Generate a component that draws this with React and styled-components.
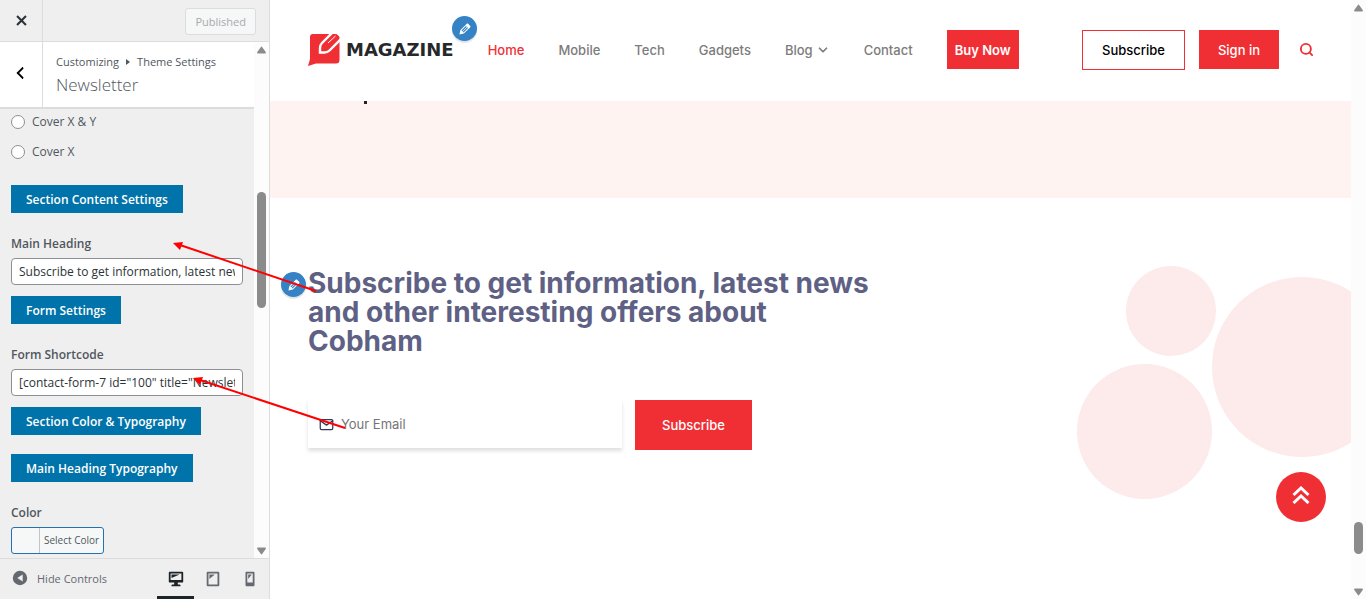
import { useState } from 'react'
import styled, { createGlobalStyle } from 'styled-components'
import { FiChevronDown, FiSearch, FiMail } from 'react-icons/fi'

const GlobalStyle = createGlobalStyle`
  * {
    box-sizing: border-box;
  }

  body {
    margin: 0;
    background: #fff;
  }

  button, input {
    font-family: inherit;
    margin: 0;
  }

  a {
    text-decoration: none;
  }
`

const Page = styled.div`
  position: relative;
  display: flex;
  height: 100vh;
  overflow: hidden;
`

const Sidebar = styled.aside`
  display: flex;
  flex-direction: column;
  flex: none;
  width: 270px;
  border-right: 1px solid #dcdcde;
  background: #efefef;
  color: #50575e;
  font-family: 'Open Sans', 'Noto Sans', sans-serif;
  font-size: 12px;
  line-height: 18px;
`

const TopBar = styled.div`
  display: flex;
  align-items: center;
  justify-content: space-between;
  flex: none;
  height: 42px;
  padding-right: 13px;
  border-bottom: 1px solid #dcdcde;
`

const IconButton = styled.button`
  display: flex;
  align-items: center;
  justify-content: center;
  align-self: stretch;
  flex: none;
  width: 43px;
  padding: ${props => props.$white ? '0 2px 4px 0' : '0'};
  border: none;
  border-right: 1px solid #dcdcde;
  background: ${props => props.$white ? '#fff' : 'transparent'};
  color: ${props => props.$white ? '#000' : '#2c3338'};
  cursor: pointer;
`

const PublishedButton = styled.button`
  height: 27px;
  margin-top: 2px;
  padding: 0 9px;
  border: 1px solid #dcdcde;
  border-radius: 3px;
  background: #f6f7f7;
  color: #a7aaad;
  font-size: 11px;
`

const ScrollArea = styled.div`
  display: flex;
  flex: 1;
  min-height: 0;
`

const Panel = styled.div`
  flex: 1;
  min-width: 0;
  overflow: hidden;
`

const PanelHeader = styled.header`
  display: flex;
  height: 67px;
  border-bottom: 2px solid #dcdcde;
  background: #fff;
`

const PanelTitle = styled.div`
  padding: 11px 13px;
`

const Breadcrumb = styled.div`
  display: flex;
  align-items: center;
  gap: 7px;
  font-size: 11px;
`

const Title = styled.h1`
  margin: 0;
  font-size: 17px;
  font-weight: 300;
  line-height: 28px;
`

const Controls = styled.div`
  display: flex;
  flex-direction: column;
  align-items: flex-start;
  padding: 4px 11px 0;
`

const RadioLabel = styled.label`
  display: flex;
  align-items: center;
  gap: 7px;
  height: 18px;
  margin-bottom: 12px;
`

const Radio = styled.input`
  appearance: none;
  width: 14px;
  height: 14px;
  border: 1px solid #8c8f94;
  border-radius: 50%;
  background: #fff;
`

const GroupButton = styled.button`
  height: 28px;
  margin-top: ${props => props.$gap || 11}px;
  padding: 0 15px;
  border: none;
  background: #0073aa;
  color: #fff;
  font-size: 12px;
  font-weight: 600;
  white-space: nowrap;
`

const Field = styled.div`
  display: flex;
  flex-direction: column;
  align-items: flex-start;
  gap: 5px;
  width: 100%;
  margin-top: 22px;
`

const FieldLabel = styled.label`
  font-weight: 600;
`

const TextInput = styled.input`
  width: 100%;
  height: 27px;
  padding: 0 7px;
  border: 1px solid #8c8f94;
  border-radius: 4px;
  background: #fff;
  color: #2c3338;
  font-size: 12px;
`

const ColorButton = styled.button`
  display: flex;
  align-items: center;
  height: 27px;
  padding: 0;
  border: 1px solid #2271b1;
  border-radius: 3px;
  background: #f6f7f7;
  color: #50575e;
  font-size: 10px;
`

const ColorText = styled.span`
  margin-left: 27px;
  padding: 0 4px;
  border-left: 1px solid #c3c4c7;
  line-height: 25px;
`

const Footer = styled.footer`
  display: flex;
  align-items: center;
  justify-content: space-between;
  flex: none;
  height: 41px;
  border-top: 1px solid #dcdcde;
`

const HideButton = styled.button`
  display: flex;
  align-items: center;
  gap: 8px;
  padding: 0 11px 2px;
  border: none;
  background: none;
  color: #646970;
  font-size: 11px;
`

const Devices = styled.div`
  display: flex;
  align-self: stretch;
  padding-right: 1px;
`

const DeviceButton = styled.button`
  display: flex;
  align-items: center;
  justify-content: center;
  width: 37px;
  padding: 3px 0 0;
  border: none;
  border-bottom: 3px solid ${props => props.$active ? '#1d2327' : 'transparent'};
  background: none;
  color: ${props => props.$active ? '#1d2327' : '#646970'};
`

const Track = styled.div`
  display: flex;
  flex-direction: column;
  align-items: center;
  flex: none;
  width: 15px;
  padding: 4px 0 3px;
  background: #fcfcfc;
  color: #8b8b8b;
`

const Space = styled.div`
  flex: ${props => props.$grow} 0 0;
`

const Thumb = styled.div`
  width: 9px;
  height: ${props => props.$size}px;
  border-radius: 5px;
  background: #8b8b8b;
`

const Preview = styled.main`
  position: relative;
  display: flex;
  flex-direction: column;
  flex: 1;
  min-width: 0;
  background: #fff;
  font-family: Inter, 'Open Sans', sans-serif;
  font-size: 13px;
`

const Header = styled.header`
  display: flex;
  align-items: center;
  flex: none;
  height: 101px;
  padding: 0 37px 2px 38px;
`

const Logo = styled.a`
  display: flex;
  align-items: center;
  gap: 6px;
  margin-right: 34px;
  color: #262829;
  font-family: 'DejaVu Sans', sans-serif;
  font-size: 18px;
  font-weight: 700;
`

const EditBadge = styled.button`
  position: absolute;
  top: ${props => props.$top}px;
  left: ${props => props.$left}px;
  display: flex;
  align-items: center;
  justify-content: center;
  width: 25px;
  height: 25px;
  padding: 0;
  border: none;
  border-radius: 50%;
  background: #3582c4;
  color: #fff;
  box-shadow: 0 2px 1px rgba(60, 67, 74, 0.15);
`

const Nav = styled.nav`
  display: flex;
  align-items: center;
  gap: 34px;
`

const NavLink = styled.a`
  display: flex;
  align-items: center;
  gap: 3px;
  color: ${props => props.$active ? '#f02f34' : '#7c7c7c'};
  font-weight: 500;
`

const ActionLink = styled.a`
  display: flex;
  align-items: center;
  justify-content: center;
  width: ${props => props.$width}px;
  height: ${props => props.$outline ? 40 : 39}px;
  border: 1px solid #f02f34;
  background: ${props => props.$outline ? '#fff' : '#f02f34'};
  color: ${props => props.$outline ? '#000' : '#fff'};
  font-weight: ${props => props.$bold ? 600 : 500};
`

const Actions = styled.div`
  display: flex;
  align-items: center;
  gap: 14px;
  margin-left: auto;
`

const SearchButton = styled.button`
  display: flex;
  margin-left: 6px;
  padding: 0;
  border: none;
  background: none;
  color: #f02f34;
`

const Band = styled.div`
  flex: none;
  height: 97px;
  padding-left: 94px;
  background: #fff3f2;
`

const BandMark = styled.div`
  width: 3px;
  height: 3px;
  background: #222;
`

const Newsletter = styled.section`
  position: relative;
  flex: 1;
  padding: 71px 38px 0;
  overflow: hidden;
`

const Heading = styled.h2`
  max-width: 580px;
  margin: 0;
  color: #5e6184;
  font-size: 28px;
  font-weight: 700;
  line-height: 29px;
`

const Form = styled.form`
  display: flex;
  gap: 13px;
  margin-top: 44px;
`

const EmailBox = styled.label`
  display: flex;
  align-items: center;
  gap: 7px;
  width: 314px;
  height: 48px;
  padding: 0 12px 0 11px;
  background: #fff;
  color: #33375c;
  box-shadow: 0 3px 4px rgba(0, 0, 0, 0.13);
`

const EmailInput = styled.input`
  flex: 1;
  min-width: 0;
  padding: 0;
  border: none;
  outline: none;
  background: transparent;
  font-size: 13px;

  &::placeholder {
    color: #757575;
  }
`

const SubmitButton = styled.button`
  width: 117px;
  height: 50px;
  border: none;
  background: #f02f34;
  color: #fff;
  font-size: 13px;
  font-weight: 500;
`

const Circles = styled.svg`
  position: absolute;
  top: 68px;
  right: 0;
`

const TopButton = styled.button`
  position: absolute;
  right: 25px;
  bottom: 77px;
  display: flex;
  align-items: center;
  justify-content: center;
  width: 50px;
  height: 50px;
  padding: 0 0 4px;
  border: none;
  border-radius: 50%;
  background: #f02f34;
  color: #fff;
`

const Arrows = styled.svg`
  position: absolute;
  top: 0;
  left: 0;
  pointer-events: none;
`

const icons = {
  close: 'M14.95 6.46L11.41 10l3.54 3.54-1.41 1.41L10 11.42l-3.53 3.53-1.42-1.42L8.58 10 5.05 6.47l1.42-1.42L10 8.58l3.54-3.53z',
  back: 'M14 5l-5 5 5 5-1 2-7-7 7-7z',
  edit: 'M13.89 3.39l2.71 2.72c.46.46.42 1.24.03 1.64l-8.01 8.02-5.56 1.16 1.16-5.58s7.6-7.63 7.99-8.03c.39-.39 1.22-.39 1.68.07zm-2.73 2.79l-5.59 5.61 1.11 1.11 5.54-5.65zm-2.97 8.23l5.58-5.6-1.07-1.08-5.59 5.6z',
  desktop: 'M3 2h14c.55 0 1 .45 1 1v10c0 .55-.45 1-1 1h-5v2h2c.55 0 1 .45 1 1v1H5v-1c0-.55.45-1 1-1h2v-2H3c-.55 0-1-.45-1-1V3c0-.55.45-1 1-1zm13 9V4H4v7h12zM5 5h9L5 9V5z',
  tablet: 'M4 2h12c.55 0 1 .45 1 1v14c0 .55-.45 1-1 1H4c-.55 0-1-.45-1-1V3c0-.55.45-1 1-1zm11 14V4H5v12h10zM6 5h6l-6 5V5z',
  phone: 'M6 2h8c.55 0 1 .45 1 1v14c0 .55-.45 1-1 1H6c-.55 0-1-.45-1-1V3c0-.55.45-1 1-1zm7 12V4H7v10h6zM8 5h4l-4 5V5z',
  collapse: 'M10 2a8 8 0 1 1 0 16 8 8 0 0 1 0-16zm3 4l-6 4 6 4z'
}

const Icon = ({ name, size = 20 }) => (
  <svg width={size} height={size} viewBox="0 0 20 20" fill="currentColor" fillRule={name === 'collapse' ? 'evenodd' : 'nonzero'}>
    <path d={icons[name]} />
  </svg>
)

const ScrollBar = ({ before, after, size }) => (
  <Track>
    <svg width="9" height="8" viewBox="0 0 9 8" fill="currentColor">
      <path d="M3.7 1.2Q4.5 0 5.3 1.2L8.7 6Q9.4 7.5 8 7.5H1Q-.4 7.5.3 6z" />
    </svg>
    <Space $grow={before} />
    <Thumb $size={size} />
    <Space $grow={after} />
    <svg width="9" height="8" viewBox="0 0 9 8" fill="currentColor">
      <path d="M3.7 6.8Q4.5 8 5.3 6.8L8.7 2Q9.4.5 8 .5H1Q-.4.5.3 2z" />
    </svg>
  </Track>
)

const Customizer = () => {
  const [heading, setHeading] = useState('Subscribe to get information, latest news and other interesting offers about Cobham')
  const [shortcode, setShortcode] = useState('[contact-form-7 id="100" title="Newsletter"]')
  const [device, setDevice] = useState('desktop')

  return (
    <Sidebar>
      <TopBar>
        <IconButton aria-label="Close"><Icon name="close" size={21} /></IconButton>
        <PublishedButton disabled>Published</PublishedButton>
      </TopBar>
      <ScrollArea>
        <Panel>
          <PanelHeader>
            <IconButton $white aria-label="Back"><Icon name="back" size={18} /></IconButton>
            <PanelTitle>
              <Breadcrumb>
                <span>Customizing</span>
                <svg width="4" height="6" fill="currentColor"><path d="M0 0l4 3-4 3z" /></svg>
                <span>Theme Settings</span>
              </Breadcrumb>
              <Title>Newsletter</Title>
            </PanelTitle>
          </PanelHeader>
          <Controls>
            <RadioLabel><Radio type="radio" name="cover" />Cover X &amp; Y</RadioLabel>
            <RadioLabel><Radio type="radio" name="cover" />Cover X</RadioLabel>
            <GroupButton $gap={12}>Section Content Settings</GroupButton>
            <Field>
              <FieldLabel htmlFor="heading">Main Heading</FieldLabel>
              <TextInput id="heading" value={heading} onChange={e => setHeading(e.target.value)} />
            </Field>
            <GroupButton>Form Settings</GroupButton>
            <Field>
              <FieldLabel htmlFor="shortcode">Form Shortcode</FieldLabel>
              <TextInput id="shortcode" value={shortcode} onChange={e => setShortcode(e.target.value)} />
            </Field>
            <GroupButton>Section Color &amp; Typography</GroupButton>
            <GroupButton $gap={19}>Main Heading Typography</GroupButton>
            <Field>
              <FieldLabel htmlFor="color">Color</FieldLabel>
              <ColorButton id="color"><ColorText>Select Color</ColorText></ColorButton>
            </Field>
          </Controls>
        </Panel>
        <ScrollBar before={136} after={235} size={116} />
      </ScrollArea>
      <Footer>
        <HideButton><Icon name="collapse" size={18} />Hide Controls</HideButton>
        <Devices>
          {['desktop', 'tablet', 'phone'].map(name => (
            <DeviceButton key={name} aria-label={name} $active={device === name} onClick={() => setDevice(name)}>
              <Icon name={name} size={18} />
            </DeviceButton>
          ))}
        </Devices>
      </Footer>
    </Sidebar>
  )
}

const SiteHeader = () => (
  <Header>
    <Logo href="#">
      <svg width="32" height="32" viewBox="0 0 32 32">
        <path d="M5 0H28Q31.500 0 31.500 3V26Q31.500 29.500 28 29.500H8L0 32L2 25V3Q2 0 5 0z" fill="#f02f34" />
        <path d="M24 -1L14 9Q12 11 12 14V18.500H16.500Q19.500 18.500 21.500 16.500L33 5" fill="none" stroke="#fff" strokeWidth="2.4" />
        <path d="M27.500 2L20 9" stroke="#fff" strokeWidth="1" />
        <path d="M28.500 0H32V3z" fill="#fff" />
      </svg>
      MAGAZINE
    </Logo>
    <EditBadge $top={16} $left={182} aria-label="Edit logo"><Icon name="edit" size={16} /></EditBadge>
    <Nav>
      <NavLink href="#" $active>Home</NavLink>
      <NavLink href="#">Mobile</NavLink>
      <NavLink href="#">Tech</NavLink>
      <NavLink href="#">Gadgets</NavLink>
      <NavLink href="#">Blog <FiChevronDown size={14} strokeWidth={3} /></NavLink>
      <NavLink href="#">Contact</NavLink>
      <ActionLink href="#" $width={72} $bold>Buy Now</ActionLink>
    </Nav>
    <Actions>
      <ActionLink href="#" $width={103} $outline>Subscribe</ActionLink>
      <ActionLink href="#" $width={80}>Sign in</ActionLink>
      <SearchButton aria-label="Search"><FiSearch size={15} strokeWidth={3} /></SearchButton>
    </Actions>
  </Header>
)

const App = () => {
  const [email, setEmail] = useState('')

  return (
    <Page>
      <GlobalStyle />
      <Customizer />
      <Preview>
        <SiteHeader />
        <Band><BandMark /></Band>
        <Newsletter>
          <Circles width="274" height="234" fill="#fdeaea">
            <circle cx="94" cy="45" r="45" />
            <circle cx="67.5" cy="165.5" r="67.5" />
            <circle cx="225" cy="101" r="90" />
          </Circles>
          <EditBadge $top={74} $left={11} aria-label="Edit heading"><Icon name="edit" size={16} /></EditBadge>
          <Heading>Subscribe to get information, latest news and other interesting offers about Cobham</Heading>
          <Form onSubmit={e => e.preventDefault()}>
            <EmailBox>
              <FiMail size={15} />
              <EmailInput type="email" aria-label="Your Email" placeholder="Your Email" value={email} onChange={e => setEmail(e.target.value)} />
            </EmailBox>
            <SubmitButton type="submit">Subscribe</SubmitButton>
          </Form>
        </Newsletter>
        <TopButton aria-label="Back to top">
          <svg width="18" height="18" viewBox="0 0 18 18" fill="none" stroke="currentColor" strokeWidth="3">
            <path d="M1.500 9L9 2l7.500 7M1.500 17L9 10l7.500 7" />
          </svg>
        </TopButton>
      </Preview>
      <ScrollBar before={505} after={34} size={32} />
      <Arrows width="360" height="440" stroke="#f00" fill="#f00">
        <path d="M316 291L180 245M345 428L200 380" strokeWidth="2" />
        <path d="M173 243l10-1-3 8zM193 378l10-1-3 8z" stroke="none" />
      </Arrows>
    </Page>
  )
}

export default App
